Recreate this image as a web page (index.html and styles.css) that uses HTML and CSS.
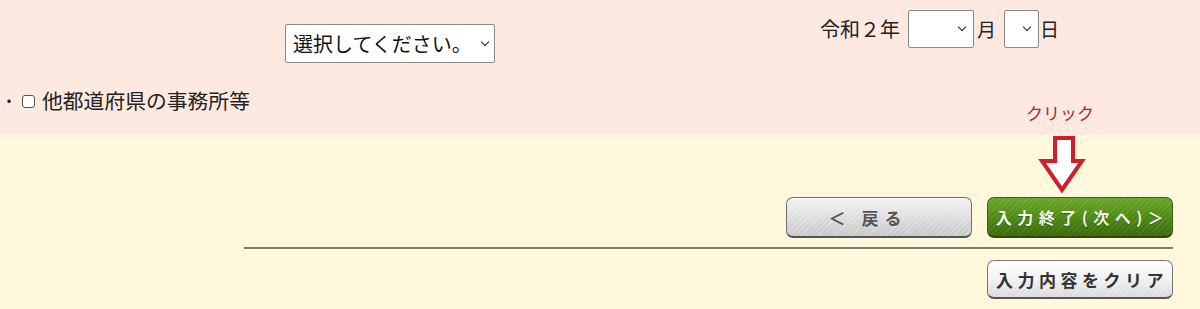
FILE: index.html
```html
<!DOCTYPE html>
<html lang="ja">
<head>
<meta charset="utf-8">
<link rel="stylesheet" href="styles.css">
</head>
<body>
<div class="top">
  <div class="row1">
    <span class="sel sel-pref"><select class="ctl"><option>選択してください。</option></select></span>
    <div class="date">
      <span class="lbl">令和２年</span>
      <span class="sel sel-m"><select class="ctl"><option></option></select></span>
      <span class="lbl">月</span>
      <span class="sel sel-d"><select class="ctl"><option></option></select></span>
      <span class="lbl">日</span>
    </div>
  </div>
  <div class="row2">
    <label class="chk"><span class="dot">・</span><input type="checkbox" class="box"><span>他都道府県の事務所等</span></label>
    <span class="click">クリック</span>
  </div>
</div>
<div class="bottom">
  <div class="arrow-row">
    <svg class="arrow" width="48" height="58" viewBox="0 0 48 58">
      <path d="M17 2 H35 V25 H44 L24 54 L4 25 H17 Z" fill="#fff" stroke="#cf1f2a" stroke-width="4" stroke-linejoin="miter"/>
    </svg>
  </div>
  <div class="btn-row">
    <button class="btn btn-back">＜&nbsp;戻る</button>
    <button class="btn btn-next">入力終了(次へ)＞</button>
  </div>
  <div class="rule"></div>
  <div class="btn-row clear-row">
    <button class="btn btn-clear">入力内容をクリア</button>
  </div>
</div>
</body>
</html>
```

FILE: styles.css
```css
html, body {
  margin: 0;
  padding: 0;
}
body {
  width: 1200px;
  height: 309px;
  overflow: hidden;
  font-family: "Noto Sans CJK JP", "Noto Sans", sans-serif;
  color: #222;
  background: #fff8dd;
}
.top {
  background: #fde9df;
  height: 135px;
  box-sizing: border-box;
  padding-top: 10px;
}
.row1 {
  display: flex;
  align-items: flex-start;
  height: 80px;
}
.sel {
  position: relative;
  display: inline-block;
}
.sel::after {
  content: "";
  position: absolute;
  right: 9px;
  top: 50%;
  width: 5px;
  height: 5px;
  margin-top: -5px;
  border-right: 1.6px solid #222;
  border-bottom: 1.6px solid #222;
  transform: rotate(45deg);
  pointer-events: none;
}
.ctl {
  -webkit-appearance: none;
  appearance: none;
  display: block;
  box-sizing: border-box;
  background: #fff;
  border: 1px solid #8a8a8a;
  border-radius: 2px;
  font-family: "Noto Sans CJK JP", sans-serif;
  color: #111;
  margin: 0;
  padding: 0 0 0 7px;
}
.sel-pref {
  margin-left: 285px;
  margin-top: 14px;
}
.sel-pref .ctl {
  width: 210px;
  height: 39px;
  font-size: 20px;
}
.sel-pref::after {
  right: 7px;
}
.date {
  display: flex;
  align-items: center;
  margin-left: 325px;
  font-size: 19px;
  height: 38px;
}
.lbl {
  line-height: 38px;
}
.date .lbl:first-child {
  font-size: 20px;
  margin-right: 8px;
}
.sel-m {
  margin-right: 3px;
}
.sel-m .ctl {
  width: 66px;
  height: 38px;
}
.sel-d {
  margin-left: 8px;
  margin-right: 1px;
}
.sel-d .ctl {
  width: 35px;
  height: 38px;
}
.row2 {
  display: flex;
  justify-content: space-between;
  align-items: flex-start;
  padding-right: 106px;
}
.chk {
  display: flex;
  align-items: center;
  font-size: 20.8px;
  line-height: 26px;
  margin-top: -3px;
}
.dot {
  width: 21px;
  margin-left: 1px;
  font-size: 16px;
}
.box {
  -webkit-appearance: none;
  appearance: none;
  width: 13px;
  height: 13px;
  box-sizing: border-box;
  border: 1px solid #555;
  border-radius: 3px;
  background: #fff;
  margin: 2px 7px 0 0;
}
.click {
  color: #b8232c;
  font-size: 17px;
  line-height: 24px;
  margin-top: 11px;
}
.bottom {
  padding: 1px 27px 0 244px;
}
.arrow-row {
  display: flex;
  justify-content: flex-end;
  padding-right: 87px;
}
.arrow {
  display: block;
}
.btn-row {
  display: flex;
  justify-content: flex-end;
  gap: 15px;
  margin-top: 3px;
}
.btn {
  box-sizing: border-box;
  width: 186px;
  height: 41px;
  border-radius: 7px;
  font-family: "Noto Sans CJK JP", sans-serif;
  font-size: 16px;
  font-weight: bold;
  letter-spacing: 3px;
  padding: 0;
  margin: 0;
  cursor: pointer;
}
.btn-back {
  color: #555;
  border: 1px solid #6f6f6f;
  border-bottom: 2px solid #555;
  background:
    repeating-linear-gradient(135deg, rgba(255,255,255,0.28) 0 1px, rgba(255,255,255,0) 1px 4px),
    linear-gradient(#f3f3f3, #dcdcdc 55%, #c8c8c8);
  box-shadow: inset 0 1px 0 #fff;
  font-size: 17px;
  letter-spacing: 6px;
  padding-right: 22px;
}
.btn-next {
  color: #f4f9ec;
  border: 1px solid #3e6010;
  border-bottom: 2px solid #2e4a08;
  background:
    repeating-linear-gradient(135deg, rgba(255,255,255,0.09) 0 1px, rgba(255,255,255,0) 1px 4px),
    linear-gradient(#6ca72a, #4f8a16 50%, #3a690b);
  text-shadow: 0 1px 1px rgba(0,0,0,0.35);
  letter-spacing: 5.5px;
  padding-left: 5px;
}
.rule {
  height: 2px;
  background: #7d7d6e;
  border-bottom: 1px solid #fff;
  margin-top: 9px;
}
.clear-row {
  margin-top: 10px;
}
.btn-clear {
  height: 39px;
  color: #333;
  border: 1px solid #777;
  border-bottom: 2px solid #555;
  background:
    repeating-linear-gradient(135deg, rgba(255,255,255,0.3) 0 1px, rgba(255,255,255,0) 1px 4px),
    linear-gradient(#ffffff, #f1f1f1 50%, #dadada);
  font-size: 17px;
  letter-spacing: 4.5px;
  padding-left: 4px;
}
```
